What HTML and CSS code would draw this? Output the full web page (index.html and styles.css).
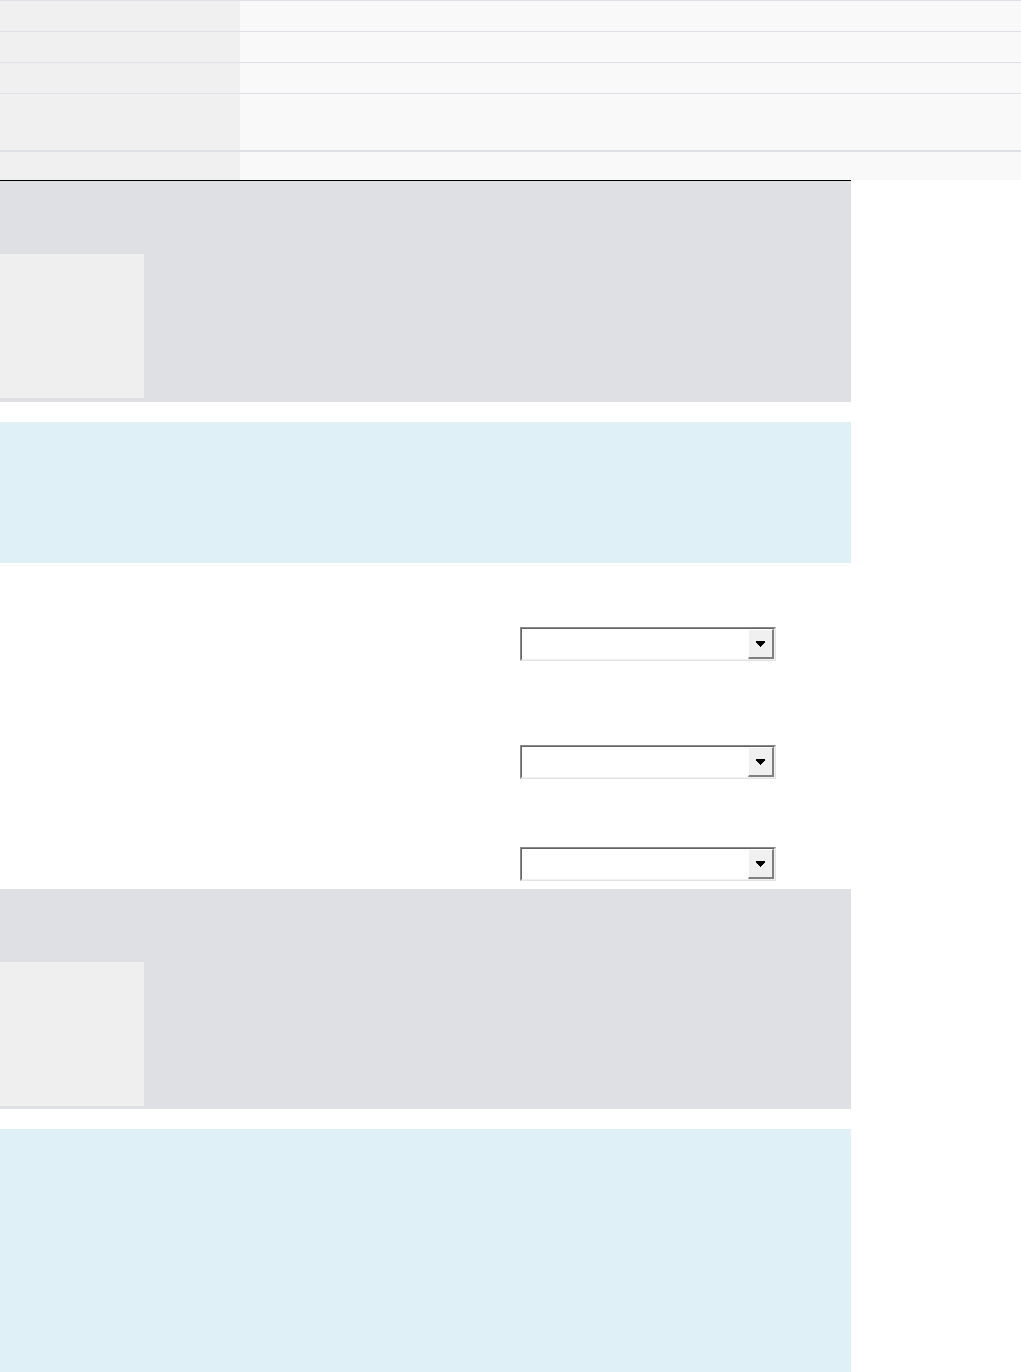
FILE: index.html
```html
<!DOCTYPE html>
<html>
<head>
<meta charset="utf-8">
<link rel="stylesheet" href="styles.css">
</head>
<body>
<div class="table">
  <div class="row"><div class="key"></div><div class="val"></div></div>
  <div class="row"><div class="key"></div><div class="val"></div></div>
  <div class="row"><div class="key"></div><div class="val"></div></div>
  <div class="row tall"><div class="key"></div><div class="val"></div></div>
  <div class="row last"><div class="key"></div><div class="val"></div></div>
</div>
<div class="panel gray first"><div class="thumb"></div></div>
<div class="panel blue short"></div>
<div class="form">
  <div class="field f1"><div class="select"><div class="inner"><div class="btn"><svg width="9" height="6" viewBox="0 0 9 6" shape-rendering="crispEdges"><path d="M0 0h9v2H0zM1 2h7v1H1zM2 3h5v1H2zM3 4h3v1H3zM4 5h1v1H4z" fill="#000"/></svg></div></div></div></div>
  <div class="field f2"><div class="select"><div class="inner"><div class="btn"><svg width="9" height="6" viewBox="0 0 9 6" shape-rendering="crispEdges"><path d="M0 0h9v2H0zM1 2h7v1H1zM2 3h5v1H2zM3 4h3v1H3zM4 5h1v1H4z" fill="#000"/></svg></div></div></div></div>
  <div class="field f3"><div class="select"><div class="inner"><div class="btn"><svg width="9" height="6" viewBox="0 0 9 6" shape-rendering="crispEdges"><path d="M0 0h9v2H0zM1 2h7v1H1zM2 3h5v1H2zM3 4h3v1H3zM4 5h1v1H4z" fill="#000"/></svg></div></div></div></div>
</div>
<div class="panel gray second"><div class="thumb"></div></div>
<div class="panel blue long"></div>
</body>
</html>
```

FILE: styles.css
```css
html, body {
  margin: 0;
  padding: 0;
  background: #ffffff;
  font-family: "Liberation Sans", Arial, sans-serif;
}
body {
  width: 1021px;
  height: 1372px;
  overflow: hidden;
}
.table {
  width: 1021px;
  display: flex;
  flex-direction: column;
}
.row {
  display: flex;
  height: 30px;
  border-top: 1px solid #e0e1e6;
}
.row.tall {
  height: 56px;
}
.row.last {
  height: 28px;
  border-top: 2px solid #dde0e4;
}
.key {
  width: 240px;
  background: #f0f0f0;
}
.val {
  flex: 1;
  background: #f9f9f9;
}
.panel {
  width: 851px;
}
.gray {
  background: #dee0e4;
}
.gray.first {
  border-top: 1px solid #000000;
  width: 850px;
  padding: 73px 1px 4px 0;
}
.gray.second {
  padding: 73px 0 3px 0;
}
.thumb {
  width: 144px;
  height: 144px;
  background: #efefef;
}
.blue {
  background: #dff0f7;
}
.blue.short {
  margin-top: 20px;
  height: 141px;
}
.blue.long {
  margin-top: 20px;
  height: 243px;
}
.form {
  height: 326px;
  display: flex;
  flex-direction: column;
  padding-left: 520px;
  box-sizing: border-box;
}
.field.f1 { margin-top: 64px; }
.field.f2 { margin-top: 84px; }
.field.f3 { margin-top: 68px; }
.select {
  width: 256px;
  height: 34px;
  box-sizing: border-box;
  border-top: 1px solid #8a8a8a;
  border-left: 1px solid #8a8a8a;
  border-right: 1px solid #e3e3e3;
  border-bottom: 1px solid #e3e3e3;
}
.inner {
  height: 100%;
  box-sizing: border-box;
  border-top: 1px solid #646464;
  border-left: 1px solid #646464;
  border-right: 1px solid #f0f0f0;
  border-bottom: 1px solid #f0f0f0;
  background: #ffffff;
  display: flex;
  justify-content: flex-end;
}
.btn {
  width: 26px;
  height: 30px;
  box-sizing: border-box;
  background: #f0f0f0;
  border-top: 1px solid #ffffff;
  border-left: 1px solid #ffffff;
  border-right: 2px solid #808080;
  border-bottom: 2px solid #808080;
  display: flex;
  align-items: center;
  justify-content: center;
}
.btn svg {
  display: block;
}
```
